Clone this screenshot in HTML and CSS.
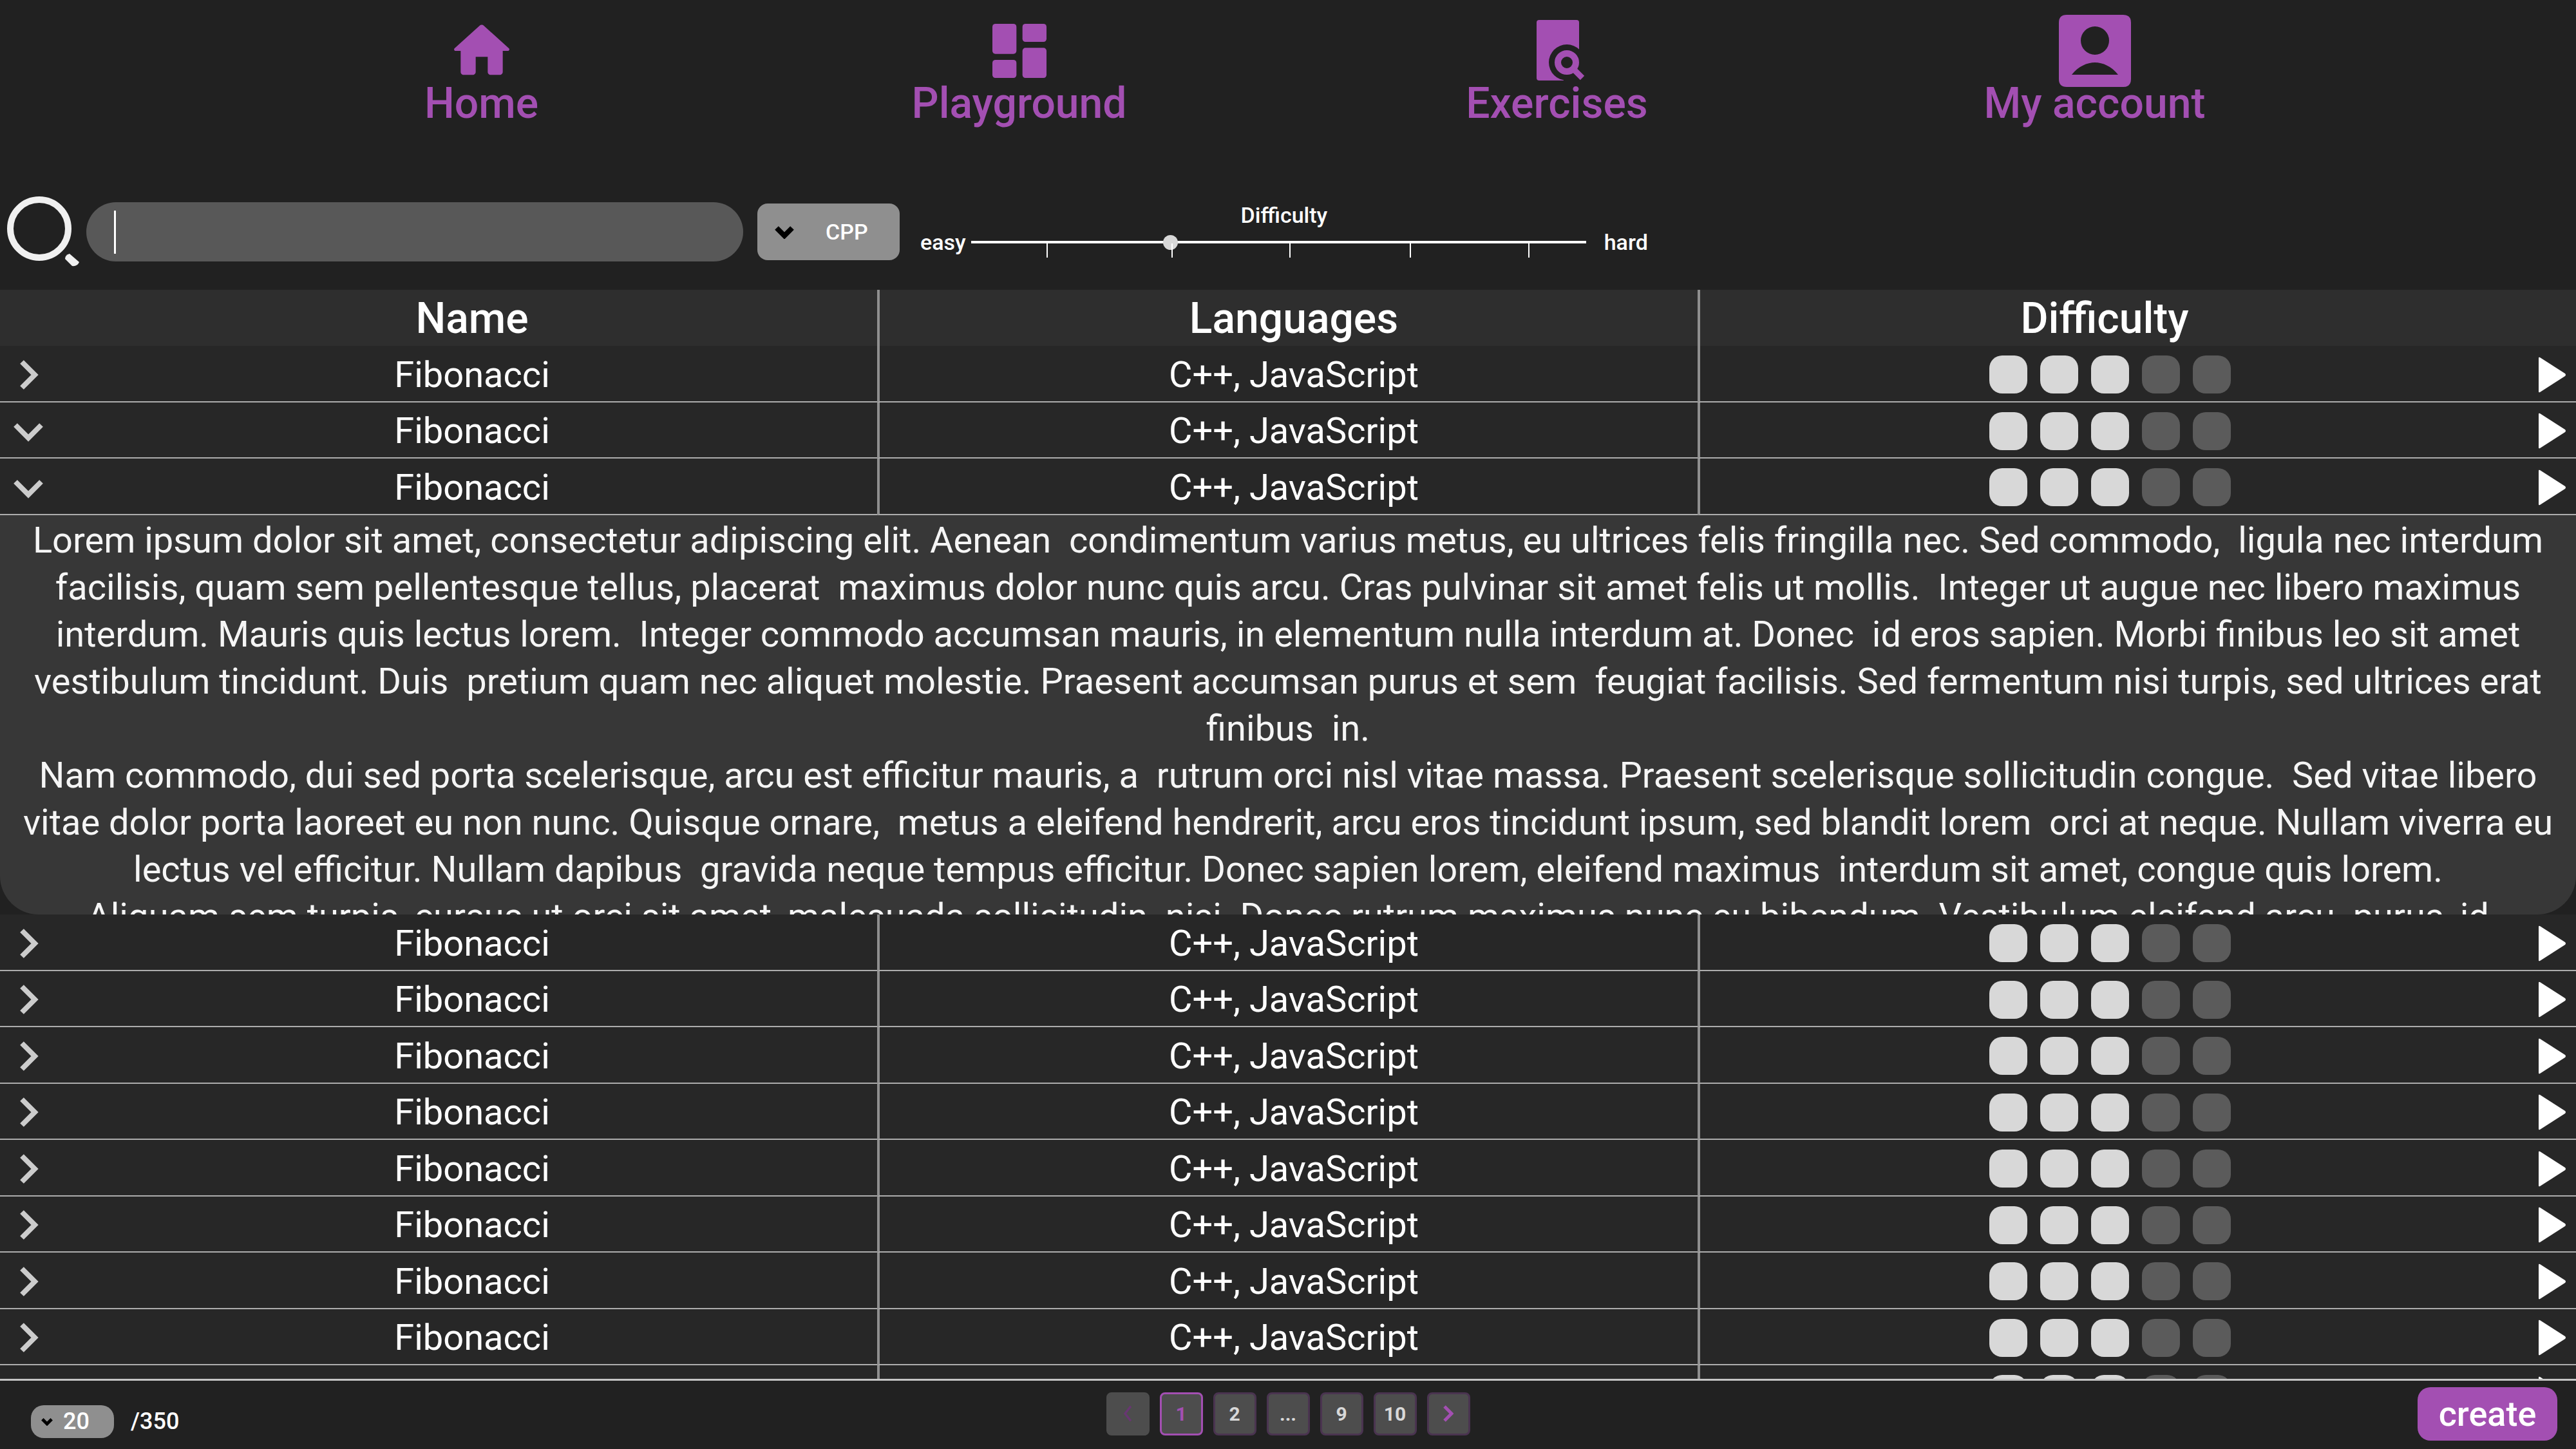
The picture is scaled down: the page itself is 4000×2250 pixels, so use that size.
FILE: index.html
```html
<!DOCTYPE html>
<html lang="en">
<head>
<meta charset="utf-8">
<meta name="viewport" content="width=device-width, initial-scale=1">
<title>Exercises</title>
<link rel="stylesheet" href="styles.css">
</head>
<body>
<svg class="sprite" aria-hidden="true">
  <symbol id="chevron-right" viewBox="0 0 48 48"><path d="M14 4l20 20-20 20" fill="none" stroke="currentColor" stroke-width="8"/></symbol>
  <symbol id="chevron-down" viewBox="0 0 48 48"><path d="M4 15l20 20 20-20" fill="none" stroke="currentColor" stroke-width="8"/></symbol>
  <symbol id="play" viewBox="0 0 44 56"><path d="M1 2Q1 0 3 1L42 26Q44 28 42 30L3 55Q1 56 1 54z" fill="currentColor"/></symbol>
</svg>

<nav class="nav">
  <a class="nav-link" href="#home">
    <svg class="nav-icon" viewBox="0 0 24 24"><path fill="currentColor" d="M10 19v-5h4v5c0 .55.45 1 1 1h3c.55 0 1-.45 1-1v-7h1.700c.46 0 .68-.57.33-.87L12.670 3.600c-.38-.34-.96-.34-1.340 0l-8.360 7.530c-.34.3-.13.87.33.87H5v7c0 .55.45 1 1 1h3c.55 0 1-.45 1-1z"/></svg>
    Home
  </a>
  <a class="nav-link" href="#playground">
    <svg class="nav-icon" viewBox="0 0 24 24"><g fill="currentColor"><rect x="3" y="3" width="8" height="10" rx="1"/><rect x="3" y="15" width="8" height="6" rx="1"/><rect x="13" y="3" width="8" height="6" rx="1"/><rect x="13" y="11" width="8" height="10" rx="1"/></g></svg>
    Playground
  </a>
  <a class="nav-link" href="#exercises">
    <svg class="nav-icon" viewBox="0 0 112 112">
      <mask id="page-cut"><rect width="112" height="112" fill="#fff"/><circle cx="71" cy="74" r="28" fill="#000"/><rect x="66" y="74" width="46" height="38" fill="#000"/></mask>
      <rect x="24" y="8" width="66" height="94" rx="4" fill="currentColor" mask="url(#page-cut)"/>
      <circle cx="71" cy="74" r="14" fill="none" stroke="currentColor" stroke-width="10"/>
      <path d="M80 83l15 15" stroke="currentColor" stroke-width="9"/>
    </svg>
    Exercises
  </a>
  <a class="nav-link" href="#account">
    <svg class="nav-icon" viewBox="0 0 112 112"><path fill="currentColor" fill-rule="evenodd" d="M12 0H100Q112 0 112 12V100Q112 112 100 112H12Q0 112 0 100V12Q0 0 12 0zM56 18a22 22 0 1 0 0 44a22 22 0 1 0 0-44zM20 93H92C82 80 68 74 56 74S30 80 20 93z"/></svg>
    My account
  </a>
</nav>

<form class="filters">
  <label class="search-label" for="search" aria-label="Search">
    <svg class="search-icon" viewBox="0 0 114 110"><circle cx="50" cy="50" r="45" fill="none" stroke="currentColor" stroke-width="10"/><path d="M97 89Q90 91 90 97L101 108Q109 109 112 102z" fill="currentColor"/></svg>
  </label>
  <input class="search-input" id="search" type="text">
  <div class="picker language">
    <svg class="picker-arrow" viewBox="0 0 30 20"><path d="M3 3l12 12 12-12" fill="none" stroke="#000" stroke-width="8"/></svg>
    <select class="picker-select" aria-label="Language"><option>CPP</option></select>
  </div>
  <div class="level">
    <label class="level-label" for="level">Difficulty</label>
    <div class="level-row">
      <span>easy</span>
      <div class="slider">
        <input class="slider-input" id="level" type="range" min="0" max="100" value="32">
        <i class="tick" style="left:12.300%"></i><i class="tick" style="left:32.600%"></i><i class="tick" style="left:51.800%"></i><i class="tick" style="left:71.300%"></i><i class="tick" style="left:90.600%"></i>
      </div>
      <span class="level-max">hard</span>
    </div>
  </div>
</form>

<main class="list">
<table class="table">
  <colgroup><col class="col-toggle"><col class="col-name"><col class="col-lang"><col><col class="col-play"></colgroup>
  <thead>
    <tr><th></th><th>Name</th><th class="lang">Languages</th><th class="diff">Difficulty</th><th></th></tr>
  </thead>
  <tbody>
    <tr><td><button class="toggle" aria-label="Expand"><svg><use href="#chevron-right"/></svg></button></td><td>Fibonacci</td><td class="lang">C++, JavaScript</td><td class="diff"><div class="rating"><i class="on"></i><i class="on"></i><i class="on"></i><i></i><i></i></div></td><td><button class="play" aria-label="Run"><svg><use href="#play"/></svg></button></td></tr>
    <tr><td><button class="toggle" aria-label="Collapse"><svg><use href="#chevron-down"/></svg></button></td><td>Fibonacci</td><td class="lang">C++, JavaScript</td><td class="diff"><div class="rating"><i class="on"></i><i class="on"></i><i class="on"></i><i></i><i></i></div></td><td><button class="play" aria-label="Run"><svg><use href="#play"/></svg></button></td></tr>
    <tr><td><button class="toggle" aria-label="Collapse"><svg><use href="#chevron-down"/></svg></button></td><td>Fibonacci</td><td class="lang">C++, JavaScript</td><td class="diff"><div class="rating"><i class="on"></i><i class="on"></i><i class="on"></i><i></i><i></i></div></td><td><button class="play" aria-label="Run"><svg><use href="#play"/></svg></button></td></tr>
    <tr class="detail-row"><td colspan="5"><div class="detail">Lorem ipsum dolor sit amet, consectetur adipiscing elit. Aenean  condimentum varius metus, eu ultrices felis fringilla nec. Sed commodo,  ligula nec interdum
facilisis, quam sem pellentesque tellus, placerat  maximus dolor nunc quis arcu. Cras pulvinar sit amet felis ut mollis.  Integer ut augue nec libero maximus
interdum. Mauris quis lectus lorem.  Integer commodo accumsan mauris, in elementum nulla interdum at. Donec  id eros sapien. Morbi finibus leo sit amet
vestibulum tincidunt. Duis  pretium quam nec aliquet molestie. Praesent accumsan purus et sem  feugiat facilisis. Sed fermentum nisi turpis, sed ultrices erat
finibus  in.
Nam commodo, dui sed porta scelerisque, arcu est efficitur mauris, a  rutrum orci nisl vitae massa. Praesent scelerisque sollicitudin congue.  Sed vitae libero
vitae dolor porta laoreet eu non nunc. Quisque ornare,  metus a eleifend hendrerit, arcu eros tincidunt ipsum, sed blandit lorem  orci at neque. Nullam viverra eu
lectus vel efficitur. Nullam dapibus  gravida neque tempus efficitur. Donec sapien lorem, eleifend maximus  interdum sit amet, congue quis lorem.
Aliquam sem turpis, cursus ut orci sit amet, malesuada sollicitudin  nisi. Donec rutrum maximus nunc eu bibendum. Vestibulum eleifend arcu  purus, id</div></td></tr>
    <tr><td><button class="toggle" aria-label="Expand"><svg><use href="#chevron-right"/></svg></button></td><td>Fibonacci</td><td class="lang">C++, JavaScript</td><td class="diff"><div class="rating"><i class="on"></i><i class="on"></i><i class="on"></i><i></i><i></i></div></td><td><button class="play" aria-label="Run"><svg><use href="#play"/></svg></button></td></tr>
    <tr><td><button class="toggle" aria-label="Expand"><svg><use href="#chevron-right"/></svg></button></td><td>Fibonacci</td><td class="lang">C++, JavaScript</td><td class="diff"><div class="rating"><i class="on"></i><i class="on"></i><i class="on"></i><i></i><i></i></div></td><td><button class="play" aria-label="Run"><svg><use href="#play"/></svg></button></td></tr>
    <tr><td><button class="toggle" aria-label="Expand"><svg><use href="#chevron-right"/></svg></button></td><td>Fibonacci</td><td class="lang">C++, JavaScript</td><td class="diff"><div class="rating"><i class="on"></i><i class="on"></i><i class="on"></i><i></i><i></i></div></td><td><button class="play" aria-label="Run"><svg><use href="#play"/></svg></button></td></tr>
    <tr><td><button class="toggle" aria-label="Expand"><svg><use href="#chevron-right"/></svg></button></td><td>Fibonacci</td><td class="lang">C++, JavaScript</td><td class="diff"><div class="rating"><i class="on"></i><i class="on"></i><i class="on"></i><i></i><i></i></div></td><td><button class="play" aria-label="Run"><svg><use href="#play"/></svg></button></td></tr>
    <tr><td><button class="toggle" aria-label="Expand"><svg><use href="#chevron-right"/></svg></button></td><td>Fibonacci</td><td class="lang">C++, JavaScript</td><td class="diff"><div class="rating"><i class="on"></i><i class="on"></i><i class="on"></i><i></i><i></i></div></td><td><button class="play" aria-label="Run"><svg><use href="#play"/></svg></button></td></tr>
    <tr><td><button class="toggle" aria-label="Expand"><svg><use href="#chevron-right"/></svg></button></td><td>Fibonacci</td><td class="lang">C++, JavaScript</td><td class="diff"><div class="rating"><i class="on"></i><i class="on"></i><i class="on"></i><i></i><i></i></div></td><td><button class="play" aria-label="Run"><svg><use href="#play"/></svg></button></td></tr>
    <tr><td><button class="toggle" aria-label="Expand"><svg><use href="#chevron-right"/></svg></button></td><td>Fibonacci</td><td class="lang">C++, JavaScript</td><td class="diff"><div class="rating"><i class="on"></i><i class="on"></i><i class="on"></i><i></i><i></i></div></td><td><button class="play" aria-label="Run"><svg><use href="#play"/></svg></button></td></tr>
    <tr><td><button class="toggle" aria-label="Expand"><svg><use href="#chevron-right"/></svg></button></td><td>Fibonacci</td><td class="lang">C++, JavaScript</td><td class="diff"><div class="rating"><i class="on"></i><i class="on"></i><i class="on"></i><i></i><i></i></div></td><td><button class="play" aria-label="Run"><svg><use href="#play"/></svg></button></td></tr>
    <tr><td></td><td></td><td class="lang"></td><td class="diff"><div class="rating"><i class="on"></i><i class="on"></i><i class="on"></i><i></i><i></i></div></td><td><button class="play" aria-label="Run"><svg><use href="#play"/></svg></button></td></tr>
  </tbody>
</table>
</main>

<footer class="footer">
  <div class="page-size">
    <div class="picker count">
      <svg class="picker-arrow" viewBox="0 0 30 20"><path d="M3 3l12 12 12-12" fill="none" stroke="#000" stroke-width="8"/></svg>
      <select class="picker-select" aria-label="Rows per page"><option>20</option></select>
    </div>
    <span>/350</span>
  </div>
  <div class="pages">
    <button class="page prev" aria-label="Previous page" disabled><svg viewBox="0 0 16 32"><path d="M14 2L3 16l11 14" fill="none" stroke="currentColor" stroke-width="4"/></svg></button>
    <button class="page current">1</button>
    <button class="page">2</button>
    <button class="page">...</button>
    <button class="page">9</button>
    <button class="page">10</button>
    <button class="page next" aria-label="Next page"><svg viewBox="0 0 16 26"><path d="M2 2l11 11L2 24" fill="none" stroke="currentColor" stroke-width="5"/></svg></button>
  </div>
  <button class="create">create</button>
</footer>
</body>
</html>
```
FILE: styles.css
```css
* { box-sizing: border-box; }

body {
  margin: 0;
  height: 100vh;
  display: flex;
  flex-direction: column;
  overflow: hidden;
  background: #212121;
  color: #fff;
  font-family: Roboto, "Liberation Sans", sans-serif;
  font-size: 34px;
  font-weight: 500;
}

button, input, select {
  margin: 0;
  padding: 0;
  border: 0;
  font: inherit;
  color: inherit;
  background: none;
  appearance: none;
  outline: none;
}

svg { display: block; }
.sprite { position: absolute; width: 0; height: 0; }

/* Navigation */
.nav {
  flex: none;
  display: grid;
  grid-template-columns: repeat(4, 1fr);
  height: 270px;
  padding: 23px 330px 0;
}
.nav-link {
  display: flex;
  flex-direction: column;
  align-items: center;
  color: #a34fb2;
  font-size: 66px;
  line-height: 52px;
  text-decoration: none;
}
.nav-icon { width: 112px; height: 112px; }

/* Filters */
.filters {
  flex: none;
  display: flex;
  align-items: center;
  height: 180px;
  padding-left: 11px;
}
.search-icon { width: 114px; height: 110px; color: #f0f0f0; }
.search-input {
  width: 1020px;
  height: 92px;
  margin-left: 9px;
  padding: 0 43px;
  border-radius: 46px;
  background: #585858 linear-gradient(#fff, #fff) 43px center / 3px 67px no-repeat;
}
.picker { position: relative; }
.picker-arrow { position: absolute; pointer-events: none; }
.picker-select { width: 100%; height: 100%; background: #8f8f8f; }
.language { width: 221px; height: 88px; margin-left: 22px; }
.language .picker-select { padding-left: 106px; border-radius: 16px; }
.language .picker-arrow { left: 27px; top: 35px; width: 30px; height: 20px; }

.level { margin-left: 32px; padding-bottom: 12px; line-height: 40px; }
.level-label { display: block; line-height: 44px; text-align: center; }
.level-row { display: flex; align-items: center; gap: 8px; }
.level-max { margin-left: 20px; }
.slider { position: relative; width: 955px; height: 40px; }
.slider-input {
  display: block;
  width: 100%;
  height: 40px;
  background: linear-gradient(#fff, #fff) center / 100% 4px no-repeat;
}
.slider-input::-webkit-slider-thumb {
  appearance: none;
  width: 23px;
  height: 23px;
  border-radius: 50%;
  background: #d8d8d8;
}
.tick { position: absolute; top: 22px; width: 2px; height: 22px; background: #fff; pointer-events: none; }

/* Table */
.list { flex: 1; min-height: 0; overflow: hidden; }
.table {
  width: 100%;
  table-layout: fixed;
  border-collapse: separate;
  border-spacing: 0;
  background: #272727;
  text-align: center;
}
.col-toggle, .col-play { width: 104px; }
.col-name { width: 31.450%; }
.col-lang { width: 31.850%; }
th, td { height: 87px; padding: 3px 0 0; }
th { background: #2e2e2e; font-size: 66px; font-weight: 500; line-height: 80px; }
td { border-bottom: 2px solid #adadad; font-size: 56px; font-weight: 400; line-height: 80px; }
tbody tr:nth-child(odd) td { height: 88px; }
th.lang, td.lang { border-left: 4px solid #8f8f8f; padding-left: 16px; }
th.diff, td.diff { border-left: 4px solid #8f8f8f; }
.toggle { display: block; margin-left: 20px; color: #ccc; }
.toggle svg { width: 48px; height: 48px; }
.play { display: block; margin-left: 45px; }
.play svg { width: 44px; height: 56px; }
.rating { display: flex; justify-content: center; gap: 20px; padding-left: 16px; }
.rating i { width: 59px; height: 59px; border-radius: 20px; background: #5b5b5b; }
.rating .on { background: #d8d8d8; }

.detail-row td { padding: 0; border: 0; background: #212121; }
.detail {
  height: 620px;
  padding-top: 3px;
  overflow: hidden;
  border-radius: 0 0 60px 60px;
  background: #373737;
  color: #f5f5f5;
  line-height: 73px;
  white-space: pre-wrap;
}

/* Footer */
.footer {
  flex: none;
  display: grid;
  grid-template-columns: 1fr auto 1fr;
  align-items: center;
  height: 109px;
  padding: 0 29px 4px;
  border-top: 3px solid #c4c4c4;
}
.page-size {
  display: flex;
  align-items: center;
  gap: 26px;
  padding: 24px 0 0 19px;
  font-size: 36px;
}
.count { width: 129px; height: 51px; }
.count .picker-select { padding-left: 50px; border-radius: 20px; }
.count .picker-arrow { left: 16px; top: 20px; width: 18px; height: 12px; }
.pages { display: flex; gap: 16px; }
.page {
  display: flex;
  align-items: center;
  justify-content: center;
  width: 67px;
  height: 67px;
  border: 3px solid #4a3450;
  border-radius: 8px;
  background: #4d4d4d;
  color: #d8d8d8;
  font-size: 30px;
  font-weight: 700;
}
.page svg { width: 16px; height: 26px; }
.current { border-color: #a34fb2; color: #a34fb2; }
.prev { border-color: #4d4d4d; color: #683672; }
.next { color: #a34fb2; }
.create {
  justify-self: end;
  width: 217px;
  height: 83px;
  border-radius: 20px;
  background: #a34fb2;
  font-size: 54px;
}
```
